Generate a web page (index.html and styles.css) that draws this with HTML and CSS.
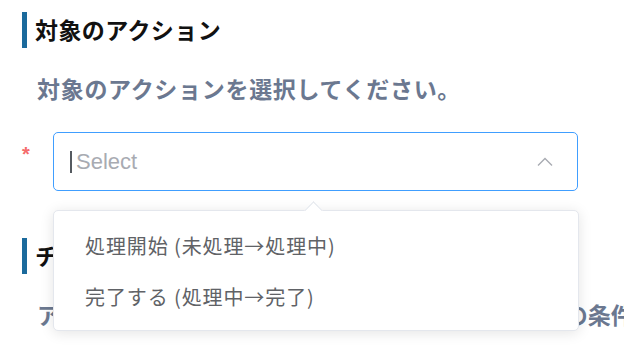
FILE: index.html
```html
<!DOCTYPE html>
<html lang="ja">
<head>
<meta charset="utf-8">
<link rel="stylesheet" href="styles.css">
</head>
<body>
<div class="page">
  <section class="section">
    <h2 class="heading">対象のアクション</h2>
    <p class="desc">対象のアクションを選択してください。</p>
    <div class="field">
      <span class="required">*</span>
      <div class="select-wrap">
        <div class="select">
          <span class="caret"></span>
          <span class="placeholder">Select</span>
          <svg class="chevron" width="16" height="10" viewBox="0 0 16 10"><path d="M1 8.5 L8 1.5 L15 8.5" fill="none" stroke="#a8abb2" stroke-width="1.4"/></svg>
        </div>
        <div class="dropdown">
          <span class="arrow"></span>
          <ul class="options">
            <li class="option">処理開始 (未処理→処理中)</li>
            <li class="option">完了する (処理中→完了)</li>
          </ul>
        </div>
      </div>
    </div>
  </section>
  <section class="section second">
    <h2 class="heading">チケットの条件</h2>
    <p class="desc">アクションを実行する対象チケットを絞り込むための条件</p>
  </section>
</div>
</body>
</html>
```
FILE: styles.css
```css
html, body {
  margin: 0;
  padding: 0;
  background: #ffffff;
}
body {
  font-family: "Noto Sans CJK JP", "Noto Sans", sans-serif;
  width: 624px;
  height: 354px;
  overflow: hidden;
}
.page {
  width: 624px;
  height: 354px;
  box-sizing: border-box;
  padding: 12px 0 0 22px;
  overflow: hidden;
}
.section {
  margin: 0;
}
.heading {
  margin: 0;
  height: 36px;
  border-left: 5px solid #1b6a9c;
  padding-left: 8px;
  font-size: 23px;
  letter-spacing: 0.4px;
  font-weight: 700;
  color: #111111;
  line-height: 35px;
}
.desc {
  margin: 25px 0 0 15px;
  font-size: 23px;
  letter-spacing: 0.7px;
  line-height: 30px;
  font-weight: 700;
  color: #6b7890;
  white-space: nowrap;
}
.field {
  display: flex;
  margin-top: 29px;
}
.required {
  width: 31px;
  color: #f56c6c;
  font-size: 20px;
  font-weight: 700;
  line-height: 20px;
  margin-top: 12px;
  font-family: "Liberation Sans", sans-serif;
}
.select-wrap {
  position: relative;
}
.select {
  box-sizing: border-box;
  width: 525px;
  height: 59px;
  border: 1px solid #409eff;
  border-radius: 5px;
  display: flex;
  align-items: center;
  padding-left: 16px;
  padding-right: 24px;
}
.caret {
  width: 2px;
  height: 22px;
  background: #555a60;
  margin-right: 4px;
}
.placeholder {
  flex: 1;
  font-family: "Liberation Sans", sans-serif;
  font-size: 22px;
  color: #a8abb2;
}
.chevron {
  display: block;
}
.dropdown {
  position: absolute;
  left: 0;
  top: 78px;
  width: 526px;
  height: 121px;
  box-sizing: border-box;
  background: #ffffff;
  border: 1px solid #e4e7ed;
  border-radius: 5px;
  box-shadow: 0 2px 14px rgba(0, 0, 0, 0.11);
  z-index: 5;
}
.arrow {
  position: absolute;
  top: -7px;
  left: 253px;
  width: 12px;
  height: 12px;
  background: #ffffff;
  border-left: 1px solid #e4e7ed;
  border-top: 1px solid #e4e7ed;
  transform: rotate(45deg);
}
.options {
  list-style: none;
  margin: 0;
  padding: 9px 0;
}
.option {
  height: 51px;
  line-height: 51px;
  padding-left: 31px;
  font-size: 20px;
  letter-spacing: 0.9px;
  color: #606266;
}
.second {
  margin-top: 47px;
}
.second .desc {
  margin-top: 25px;
  letter-spacing: 0;
}
```
